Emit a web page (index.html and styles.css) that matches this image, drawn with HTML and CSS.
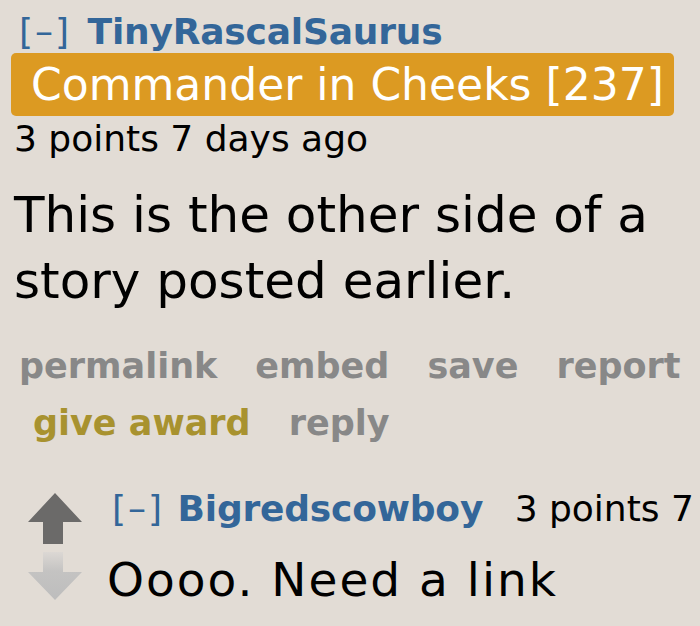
FILE: index.html
```html
<!DOCTYPE html>
<html lang="en">
<head>
    <meta charset="UTF-8">
    <meta name="viewport" content="width=device-width, initial-scale=1.0">
    <title>Comment thread</title>
    <link rel="stylesheet" href="styles.css">
</head>
<body>
    <div class="comment">
        <p class="tagline">
            <span class="expand">[–]</span>
            <span class="author">TinyRascalSaurus</span>
        </p>
        <span class="flair">Commander in Cheeks [237]</span>
        <p class="meta">3 points 7 days ago</p>

        <div class="body">This is the other side of a story posted earlier.</div>

        <ul class="buttons">
            <li>permalink</li>
            <li>embed</li>
            <li>save</li>
            <li>report</li>
            <li class="award">give award</li>
            <li>reply</li>
        </ul>

        <div class="child">
            <div class="votes">
                <svg class="arrow" width="56" height="51" viewBox="0 0 56 51">
                    <path d="M28 0 L55 29 L36 29 L36 51 L16 51 L16 29 L1 29 Z" fill="#6b6a69"/>
                </svg>
                <svg class="arrow" width="56" height="50" viewBox="0 0 56 50">
                    <defs>
                        <linearGradient id="fade" x1="0" y1="0" x2="0" y2="1">
                            <stop offset="0" stop-color="#dcd8d4"/>
                            <stop offset="0.4" stop-color="#c4c3c2"/>
                            <stop offset="1" stop-color="#bdbdbd"/>
                        </linearGradient>
                    </defs>
                    <path d="M16 0 L36 0 L36 20 L55 20 L28 48 L1 20 L16 20 Z" fill="url(#fade)"/>
                </svg>
            </div>
            <div class="entry">
                <p class="tagline small">
                    <span class="expand">[–]</span>
                    <span class="author">Bigredscowboy</span>
                    <span class="score">3 points 7 days ago</span>
                </p>
                <div class="body child-body">Oooo. Need a link</div>
            </div>
        </div>
    </div>
</body>
</html>
```

FILE: styles.css
```css
/* Base page */
* {
    margin: 0;
    padding: 0;
    box-sizing: border-box;
}

body {
    background-color: #e2dcd5;
    font-family: 'DejaVu Sans', Verdana, sans-serif;
    color: #000;
    overflow: hidden;
}

.comment {
    padding: 11px 0 0 14px;
}

/* Author line */
.tagline {
    font-size: 36px;
    line-height: 42px;
    white-space: nowrap;
}

.expand {
    color: #336699;
    font-weight: normal;
    letter-spacing: 2px;
    margin-left: 5px;
    margin-right: 5px;
}

.author {
    color: #336699;
    font-weight: bold;
    letter-spacing: -0.2px;
}

/* Flair badge */
.flair {
    display: inline-block;
    background-color: #dc9a22;
    color: #fff;
    font-size: 44px;
    line-height: 63px;
    padding: 0 10px 0 20px;
    border-radius: 5px;
    margin-left: -3px;
}

.meta {
    font-size: 36px;
    line-height: 42px;
    margin-top: 2px;
}

/* Comment text */
.body {
    font-size: 50px;
    line-height: 66px;
    margin-top: 22px;
    padding-right: 30px;
}

/* Action links */
.buttons {
    list-style: none;
    display: flex;
    flex-wrap: wrap;
    column-gap: 38px;
    margin-top: 24px;
    padding-left: 5px;
    font-size: 35px;
    font-weight: bold;
    line-height: 57px;
    color: #888;
}

.buttons .award {
    color: #a8922f;
    margin-left: 14px;
}

/* Nested reply */
.child {
    display: flex;
    gap: 21px;
    margin-top: 36px;
    padding-left: 13px;
}

.votes {
    display: flex;
    flex-direction: column;
    gap: 8px;
    padding-top: 5px;
}

.entry {
    flex: 1;
    min-width: 0;
}

.tagline.small .expand {
    margin-left: 8px;
    margin-right: 2px;
}

.tagline.small .score {
    margin-left: 20px;
}

.child-body {
    font-size: 47px;
    line-height: 60px;
    margin-top: 20px;
    padding-left: 3px;
    letter-spacing: 2px;
}
```
